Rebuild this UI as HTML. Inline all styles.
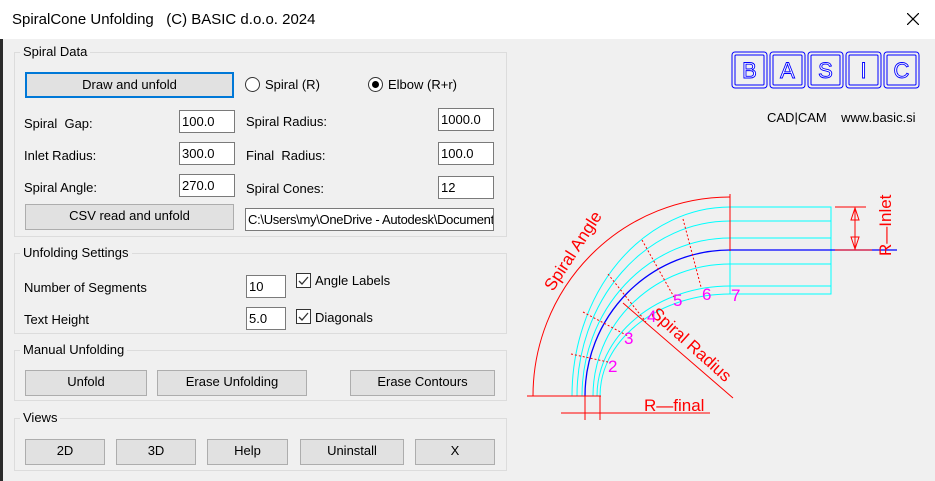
<!DOCTYPE html>
<html><head><style>
*{margin:0;padding:0;box-sizing:border-box}
body{width:935px;height:481px;background:#f0f0f0;font-family:"Liberation Sans",sans-serif;font-size:13px;color:#000;position:relative;overflow:hidden}
.a{position:absolute;white-space:nowrap}
.title{position:absolute;left:0;top:0;width:935px;height:39px;background:#fff}
.grp{position:absolute;border:1px solid #dcdcdc}
.gl{position:absolute;background:#f0f0f0;padding:0 3px;top:-9px;left:5px;font-size:13px;white-space:nowrap}
.btn{position:absolute;background:#e1e1e1;border:1px solid #adadad;text-align:center;line-height:22px;font-size:13px;white-space:nowrap}
.inp{position:absolute;background:#fff;border:1px solid #7a7a7a;height:23px;padding-left:2px;line-height:21px;font-size:13px;overflow:hidden;white-space:nowrap}
.cb{position:absolute;width:15px;height:15px;border:1px solid #333;background:#fff}
.rd{position:absolute;width:15px;height:15px;border:1px solid #333;border-radius:50%;background:#fff}
</style></head><body>
<div class="title"></div>
<div class="a" style="left:12px;top:11px;font-size:15px">SpiralCone Unfolding&nbsp;&nbsp;&nbsp;(C) BASIC d.o.o. 2024</div>
<svg class="a" style="left:907px;top:13px" width="12" height="12"><path d="M0 0L12 12M12 0L0 12" stroke="#000" stroke-width="1.2"/></svg>
<div style="position:absolute;left:0;top:39px;width:3px;height:442px;background:#2b2b2b"></div>

<div class="grp" style="left:14px;top:52px;width:493px;height:185px"><div class="gl">Spiral Data</div></div>
<div class="btn" style="left:25px;top:72px;width:209px;height:26px;border:2px solid #0078d7;line-height:22px">Draw and unfold</div>
<div class="rd" style="left:245px;top:77px"></div><div class="a" style="left:265px;top:77px">Spiral (R)</div>
<div class="rd" style="left:368px;top:77px"><div style="position:absolute;left:3px;top:3px;width:7px;height:7px;border-radius:50%;background:#000"></div></div><div class="a" style="left:388px;top:77px">Elbow (R+r)</div>
<div class="a" style="left:24px;top:116px">Spiral&nbsp; Gap:</div><div class="inp" style="left:179px;top:110px;width:56px">100.0</div>
<div class="a" style="left:24px;top:148px">Inlet Radius:</div><div class="inp" style="left:179px;top:142px;width:56px">300.0</div>
<div class="a" style="left:24px;top:180px">Spiral Angle:</div><div class="inp" style="left:179px;top:174px;width:56px">270.0</div>
<div class="a" style="left:246px;top:114px">Spiral Radius:</div><div class="inp" style="left:438px;top:108px;width:56px">1000.0</div>
<div class="a" style="left:246px;top:148px">Final&nbsp; Radius:</div><div class="inp" style="left:438px;top:142px;width:56px">100.0</div>
<div class="a" style="left:246px;top:181px">Spiral Cones:</div><div class="inp" style="left:438px;top:176px;width:56px">12</div>
<div class="btn" style="left:25px;top:204px;width:209px;height:26px">CSV read and unfold</div>
<div class="inp" style="left:245px;top:208px;width:249px;letter-spacing:-0.3px">C:\Users\my\OneDrive - Autodesk\Documents</div>

<div class="grp" style="left:14px;top:253px;width:493px;height:81px"><div class="gl">Unfolding Settings</div></div>
<div class="a" style="left:24px;top:280px">Number of Segments</div><div class="inp" style="left:246px;top:275px;width:40px">10</div>
<div class="a" style="left:24px;top:312px">Text Height</div><div class="inp" style="left:246px;top:307px;width:40px">5.0</div>
<div class="cb" style="left:296px;top:273px"><svg width="13" height="13" style="position:absolute;left:0;top:0"><path d="M2 7L5 10L11 3" fill="none" stroke="#333" stroke-width="1.3"/></svg></div><div class="a" style="left:315px;top:273px">Angle Labels</div>
<div class="cb" style="left:296px;top:309px"><svg width="13" height="13" style="position:absolute;left:0;top:0"><path d="M2 7L5 10L11 3" fill="none" stroke="#333" stroke-width="1.3"/></svg></div><div class="a" style="left:315px;top:310px">Diagonals</div>

<div class="grp" style="left:14px;top:350px;width:493px;height:51px"><div class="gl">Manual Unfolding</div></div>
<div class="btn" style="left:25px;top:370px;width:122px;height:26px">Unfold</div>
<div class="btn" style="left:157px;top:370px;width:150px;height:26px">Erase Unfolding</div>
<div class="btn" style="left:350px;top:370px;width:145px;height:26px">Erase Contours</div>

<div class="grp" style="left:14px;top:418px;width:493px;height:53px"><div class="gl">Views</div></div>
<div class="btn" style="left:25px;top:439px;width:80px;height:26px">2D</div>
<div class="btn" style="left:116px;top:439px;width:80px;height:26px">3D</div>
<div class="btn" style="left:207px;top:439px;width:81px;height:26px">Help</div>
<div class="btn" style="left:300px;top:439px;width:104px;height:26px">Uninstall</div>
<div class="btn" style="left:415px;top:439px;width:80px;height:26px">X</div>

<svg class="a" style="left:0;top:0" width="935" height="481" viewBox="0 0 935 481">
<g fill="none" stroke="#0000ff" stroke-width="1">
<rect x="732" y="52" width="35" height="36" rx="3"/><rect x="735" y="55" width="29" height="30" rx="1"/>
<rect x="770" y="52" width="35" height="36" rx="3"/><rect x="773" y="55" width="29" height="30" rx="1"/>
<rect x="808" y="52" width="35" height="36" rx="3"/><rect x="811" y="55" width="29" height="30" rx="1"/>
<rect x="846" y="52" width="35" height="36" rx="3"/><rect x="849" y="55" width="29" height="30" rx="1"/>
<rect x="884" y="52" width="35" height="36" rx="3"/><rect x="887" y="55" width="29" height="30" rx="1"/>
</g>
<g font-family="Liberation Sans" font-size="22" fill="#fff" stroke="#0000ff" stroke-width="0.9" text-anchor="middle">
<text x="749.5" y="78">B</text><text x="787.5" y="78">A</text><text x="825.5" y="78">S</text><text x="863.5" y="78">I</text><text x="901.5" y="78">C</text>
</g>
<text x="767" y="122" font-family="Liberation Sans" font-size="13">CAD|CAM&nbsp;&nbsp;&nbsp; www.basic.si</text>

<g fill="none" stroke="#00ffff" stroke-width="1">
<path d="M572 396 A158 189 0 0 1 730 207 H831 V294 H730"/>
<path d="M577 396 A153 175 0 0 1 730 221 H831"/>
<path d="M582 396 A148 158 0 0 1 730 238 H831"/>
<path d="M593 396 A137 132 0 0 1 730 264 H831"/>
<path d="M597 396 A133 110 0 0 1 730 286 H831"/>
<path d="M600 396 A130 102 0 0 1 730 294"/>
<path d="M730 207 V294"/>
</g>
<path d="M585 396 A145 146 0 0 1 730 250 H897" fill="none" stroke="#0000ff" stroke-width="1.3"/>
<g fill="none" stroke="#ff0000" stroke-width="1" >
<path d="M533 396 A197 199 0 0 1 730 197"/>
<path d="M730 194 V251"/>
<path d="M527 396 H601"/>
<path d="M585 396 V420 M600 396 V420 M561 413 H710"/>
<path d="M623 303 L733 398"/>
<path d="M835 207 H866 M835 250 H872 M855 210 V247"/>
<path d="M855 208 l-4 12 h8 z M855 249 l-4 -12 h8 z"/>
<g stroke-dasharray="2 2">
<path d="M571 354 L608 362 M583 312 L628 336 M608 274 L646 322 M642 240 L674 297 M683 219 L701 287"/>
</g>
</g>
<g fill="#ff0000" font-family="Liberation Sans" font-size="17">
<text x="644" y="411">R—final</text>
<text transform="translate(553,292) rotate(-57)">Spiral Angle</text>
<text transform="translate(650,315) rotate(42)">Spiral Radius</text>
<text transform="translate(891,256) rotate(-90)">R—Inlet</text>
</g>
<g fill="#ff00ff" font-family="Liberation Sans" font-size="17">
<text x="608" y="372">2</text><text x="624" y="344">3</text><text x="647" y="322">4</text><text x="673" y="306">5</text><text x="702" y="300">6</text><text x="731" y="301">7</text>
</g>
</svg>
</body></html>
